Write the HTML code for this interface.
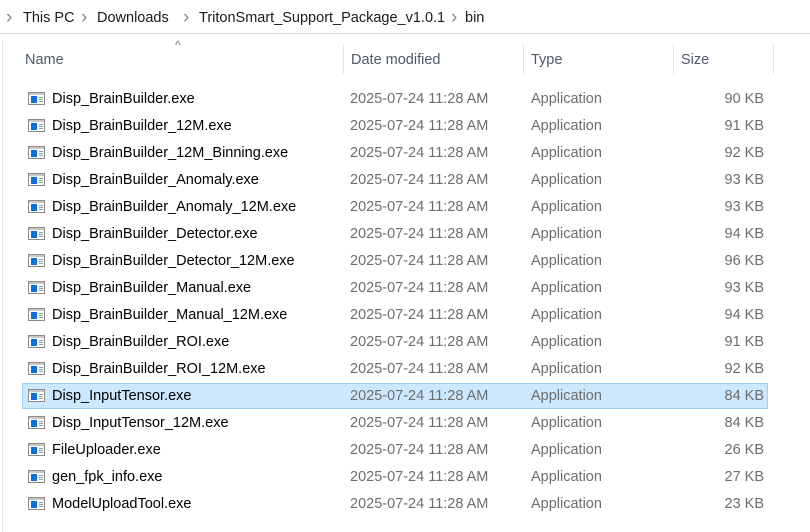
<!DOCTYPE html>
<html><head><meta charset="utf-8"><style>
body{margin:0;width:810px;height:532px;background:#fff;font-family:"Liberation Sans",sans-serif;font-size:14.5px;position:relative;overflow:hidden}
.bc{position:absolute;left:0;top:0;width:810px;height:33px;border-bottom:1px solid #d9d9d9;}
.bc span{position:absolute;top:10px;color:#1a1a1a}
.bc .ch{color:#8a8a8a;font-size:19px;top:7px}
.lb{position:absolute;left:2px;top:40px;width:1px;height:492px;background:#e8e8e8}
.hd{position:absolute;top:52px;color:#4d5a6b}
.sep{position:absolute;top:44px;width:1px;height:30px;background:#e5e5e5}
.row{position:absolute;left:22px;width:746px;height:26px}
.row.sel{background:#cce8ff;box-shadow:inset 0 0 0 1px #99d1ff}
.row div{position:absolute;top:5px;white-space:nowrap}
.n{left:30px;color:#000}
.d{left:328px;color:#6d6d6d}
.t{left:509px;color:#6d6d6d}
.s{right:4px;color:#6d6d6d;text-align:right}
.ic{position:absolute;left:6px;top:6px;width:15px;height:11px;border:1px solid #8a8a8a;background:#fff}
.ic:before{content:"";position:absolute;left:0;top:0;width:15px;height:2px;background:#c8c8c8}
.ic i{position:absolute;left:2px;top:3px;width:6px;height:7px;background:#0a6fd8}
.ic b{position:absolute;left:10px;top:4px;width:4px;height:1px;background:#999;box-shadow:0 2px 0 #999,0 4px 0 #999}
</style></head><body>
<div class="bc">
<span class="ch" style="left:6px">›</span>
<span style="left:23px">This PC</span>
<span class="ch" style="left:81px">›</span>
<span style="left:97px">Downloads</span>
<span class="ch" style="left:183px">›</span>
<span style="left:199px">TritonSmart_Support_Package_v1.0.1</span>
<span class="ch" style="left:451px">›</span>
<span style="left:465px">bin</span>
</div>
<div class="lb"></div>
<div style="position:absolute;left:175px;top:38px;color:#777;font-size:12px">^</div>
<div class="hd" style="left:25px">Name</div>
<div class="sep" style="left:343px"></div>
<div class="hd" style="left:351px">Date modified</div>
<div class="sep" style="left:523px"></div>
<div class="hd" style="left:531px">Type</div>
<div class="sep" style="left:673px"></div>
<div class="hd" style="left:681px">Size</div>
<div class="sep" style="left:773px"></div>
<div id="rows"></div>
<script>
var f=[["Disp_BrainBuilder.exe",90],["Disp_BrainBuilder_12M.exe",91],["Disp_BrainBuilder_12M_Binning.exe",92],["Disp_BrainBuilder_Anomaly.exe",93],["Disp_BrainBuilder_Anomaly_12M.exe",93],["Disp_BrainBuilder_Detector.exe",94],["Disp_BrainBuilder_Detector_12M.exe",96],["Disp_BrainBuilder_Manual.exe",93],["Disp_BrainBuilder_Manual_12M.exe",94],["Disp_BrainBuilder_ROI.exe",91],["Disp_BrainBuilder_ROI_12M.exe",92],["Disp_InputTensor.exe",84],["Disp_InputTensor_12M.exe",84],["FileUploader.exe",26],["gen_fpk_info.exe",27],["ModelUploadTool.exe",23]];
var h="";f.forEach(function(r,i){var y=86+i*27;h+='<div class="row'+(i==11?' sel':'')+'" style="top:'+y+'px"><span class="ic"><i></i><b></b></span><div class="n">'+r[0]+'</div><div class="d">2025-07-24 11:28 AM</div><div class="t">Application</div><div class="s">'+r[1]+' KB</div></div>';});
document.getElementById("rows").innerHTML=h;
</script>
</body></html>
